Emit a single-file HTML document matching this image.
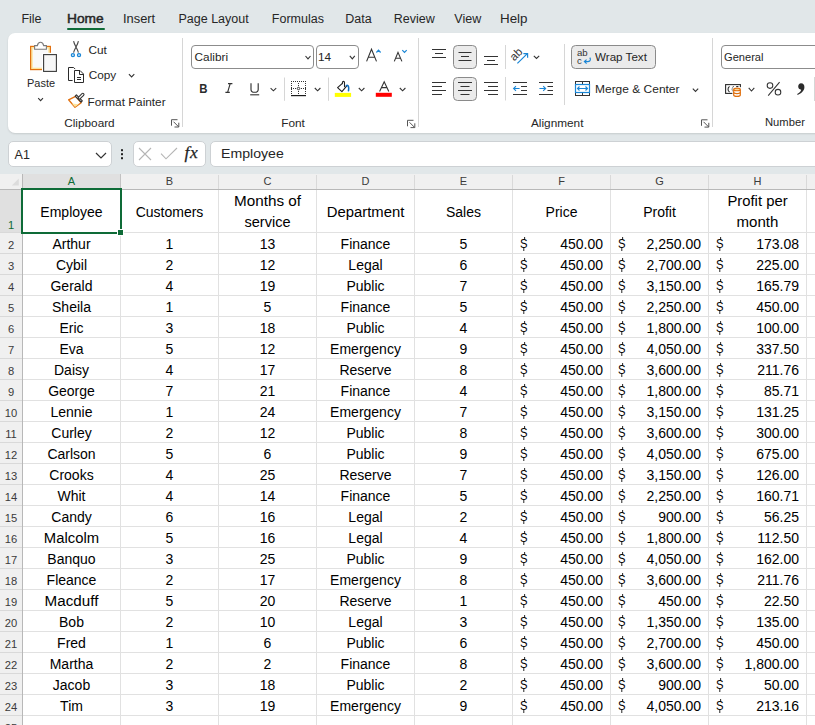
<!DOCTYPE html><html><head><meta charset="utf-8"><style>
html,body{margin:0;padding:0}
body{width:815px;height:725px;overflow:hidden;position:relative;background:#e1e7e9;font-family:'Liberation Sans', sans-serif}
.t{position:absolute;white-space:nowrap;line-height:1;z-index:2}
.a{position:absolute}
svg{position:absolute;overflow:visible;z-index:1}
.d{font-size:13.3px;color:#000;transform:scaleX(0.85);transform-origin:0 0}
.d::before,.d::after{content:'';position:absolute;width:1.1px;background:#000}
.d::before{left:4.6px;top:-0.4px;height:2.8px}
.d::after{left:3.7px;top:11.1px;height:2.4px}
</style></head><body>
<div class="t" style="left:21.40px;top:12.52px;font-size:12.5px;color:#262626;font-weight:400;">File</div>
<div class="t" style="left:67.00px;top:12.52px;font-size:12.5px;color:#262626;font-weight:400;transform:scaleX(1.1);transform-origin:0 0;-webkit-text-stroke:0.45px #262626;">Home</div>
<div class="t" style="left:122.90px;top:12.52px;font-size:12.5px;color:#262626;font-weight:400;transform:scaleX(1.03);transform-origin:0 0;">Insert</div>
<div class="t" style="left:178.50px;top:12.52px;font-size:12.5px;color:#262626;font-weight:400;">Page Layout</div>
<div class="t" style="left:271.80px;top:12.52px;font-size:12.5px;color:#262626;font-weight:400;">Formulas</div>
<div class="t" style="left:345.30px;top:12.52px;font-size:12.5px;color:#262626;font-weight:400;">Data</div>
<div class="t" style="left:393.70px;top:12.52px;font-size:12.5px;color:#262626;font-weight:400;">Review</div>
<div class="t" style="left:454.30px;top:12.52px;font-size:12.5px;color:#262626;font-weight:400;">View</div>
<div class="t" style="left:500.20px;top:12.52px;font-size:12.5px;color:#262626;font-weight:400;transform:scaleX(1.07);transform-origin:0 0;">Help</div>
<div class="a" style="left:67px;top:28px;width:38px;height:2px;background:#0e6b37;border-radius:1px"></div>
<div class="a" style="left:8px;top:33px;width:830px;height:100px;background:#fff;border-radius:7px;box-shadow:0 1px 2px rgba(0,0,0,0.12)"></div>
<div class="t" style="left:27.20px;top:78.21px;font-size:11.8px;color:#262626;font-weight:400;transform:scaleX(0.93);transform-origin:0 0;">Paste</div>
<div class="t" style="left:88.40px;top:44.61px;font-size:11.8px;color:#262626;font-weight:400;">Cut</div>
<div class="t" style="left:88.70px;top:70.41px;font-size:11.8px;color:#262626;font-weight:400;">Copy</div>
<div class="t" style="left:87.60px;top:96.61px;font-size:11.8px;color:#262626;font-weight:400;">Format Painter</div>
<div class="t" style="left:64.20px;top:118.01px;font-size:11.8px;color:#262626;font-weight:400;">Clipboard</div>
<div class="t" style="left:281.20px;top:118.41px;font-size:11.8px;color:#262626;font-weight:400;">Font</div>
<div class="t" style="left:531.00px;top:118.21px;font-size:11.8px;color:#262626;font-weight:400;">Alignment</div>
<div class="t" style="left:765.00px;top:117.41px;font-size:11.8px;color:#262626;font-weight:400;transform:scaleX(0.95);transform-origin:0 0;">Number</div>
<div class="t" style="left:595.20px;top:52.01px;font-size:11.8px;color:#262626;font-weight:400;transform:scaleX(0.985);transform-origin:0 0;">Wrap Text</div>
<div class="t" style="left:595.20px;top:84.01px;font-size:11.8px;color:#262626;font-weight:400;transform:scaleX(1.015);transform-origin:0 0;">Merge &amp; Center</div>
<div class="a" style="left:182px;top:38px;width:1px;height:89px;background:#d6d6d6"></div>
<div class="a" style="left:418px;top:38px;width:1px;height:89px;background:#d6d6d6"></div>
<div class="a" style="left:712px;top:38px;width:1px;height:89px;background:#d6d6d6"></div>
<div class="a" style="left:191px;top:45px;width:121px;height:22px;border:1px solid #8c8c8c;border-radius:4px;background:#fff"></div>
<div class="a" style="left:316px;top:45px;width:41px;height:22px;border:1px solid #8c8c8c;border-radius:4px;background:#fff"></div>
<div class="t" style="left:194.60px;top:51.81px;font-size:11.8px;color:#262626;font-weight:400;">Calibri</div>
<div class="t" style="left:317.90px;top:52.01px;font-size:11.8px;color:#262626;font-weight:400;">14</div>
<div class="a" style="left:721px;top:45px;width:120px;height:22px;border:1px solid #8c8c8c;border-radius:4px;background:#fff"></div>
<div class="t" style="left:724.20px;top:51.81px;font-size:11.8px;color:#262626;font-weight:400;transform:scaleX(0.94);transform-origin:0 0;">General</div>
<div class="a" style="left:8px;top:141px;width:102px;height:24px;border:1px solid #cdd1d4;border-radius:5px;background:#fff"></div>
<div class="t" style="left:14.60px;top:149.02px;font-size:12.5px;color:#262626;font-weight:400;">A1</div>
<div class="a" style="left:133px;top:141px;width:71px;height:24px;border:1px solid #cdd1d4;border-radius:5px;background:#fff"></div>
<div class="a" style="left:210px;top:141px;width:640px;height:24px;border:1px solid #cdd1d4;border-radius:5px;background:#fff"></div>
<div class="t" style="left:221.20px;top:147.37px;font-size:13.5px;color:#262626;font-weight:400;transform:scaleX(1.045);transform-origin:0 0;">Employee</div>
<div class="a" style="left:0;top:174px;width:815px;height:551px;background:#fff"></div>
<div class="a" style="left:0;top:174px;width:815px;height:15px;background:#f0f0f0"></div>
<div class="a" style="left:23px;top:174px;width:97px;height:15px;background:#e0e0e0"></div>
<div class="a" style="left:0;top:190px;width:22px;height:535px;background:#f0f0f0"></div>
<div class="a" style="left:0;top:190px;width:22px;height:42px;background:#e0e0e0"></div>
<div class="a" style="left:0;top:189px;width:815px;height:1px;background:#b8b8b8"></div>
<div class="a" style="left:22px;top:174px;width:1px;height:551px;background:#b8b8b8"></div>
<div class="a" style="left:23px;top:232px;width:792px;height:1px;background:#e1e1e1"></div>
<div class="a" style="left:0;top:232px;width:22px;height:1px;background:#d9d9d9"></div>
<div class="a" style="left:23px;top:253px;width:792px;height:1px;background:#e1e1e1"></div>
<div class="a" style="left:0;top:253px;width:22px;height:1px;background:#d9d9d9"></div>
<div class="a" style="left:23px;top:274px;width:792px;height:1px;background:#e1e1e1"></div>
<div class="a" style="left:0;top:274px;width:22px;height:1px;background:#d9d9d9"></div>
<div class="a" style="left:23px;top:295px;width:792px;height:1px;background:#e1e1e1"></div>
<div class="a" style="left:0;top:295px;width:22px;height:1px;background:#d9d9d9"></div>
<div class="a" style="left:23px;top:316px;width:792px;height:1px;background:#e1e1e1"></div>
<div class="a" style="left:0;top:316px;width:22px;height:1px;background:#d9d9d9"></div>
<div class="a" style="left:23px;top:337px;width:792px;height:1px;background:#e1e1e1"></div>
<div class="a" style="left:0;top:337px;width:22px;height:1px;background:#d9d9d9"></div>
<div class="a" style="left:23px;top:358px;width:792px;height:1px;background:#e1e1e1"></div>
<div class="a" style="left:0;top:358px;width:22px;height:1px;background:#d9d9d9"></div>
<div class="a" style="left:23px;top:379px;width:792px;height:1px;background:#e1e1e1"></div>
<div class="a" style="left:0;top:379px;width:22px;height:1px;background:#d9d9d9"></div>
<div class="a" style="left:23px;top:400px;width:792px;height:1px;background:#e1e1e1"></div>
<div class="a" style="left:0;top:400px;width:22px;height:1px;background:#d9d9d9"></div>
<div class="a" style="left:23px;top:421px;width:792px;height:1px;background:#e1e1e1"></div>
<div class="a" style="left:0;top:421px;width:22px;height:1px;background:#d9d9d9"></div>
<div class="a" style="left:23px;top:442px;width:792px;height:1px;background:#e1e1e1"></div>
<div class="a" style="left:0;top:442px;width:22px;height:1px;background:#d9d9d9"></div>
<div class="a" style="left:23px;top:463px;width:792px;height:1px;background:#e1e1e1"></div>
<div class="a" style="left:0;top:463px;width:22px;height:1px;background:#d9d9d9"></div>
<div class="a" style="left:23px;top:484px;width:792px;height:1px;background:#e1e1e1"></div>
<div class="a" style="left:0;top:484px;width:22px;height:1px;background:#d9d9d9"></div>
<div class="a" style="left:23px;top:505px;width:792px;height:1px;background:#e1e1e1"></div>
<div class="a" style="left:0;top:505px;width:22px;height:1px;background:#d9d9d9"></div>
<div class="a" style="left:23px;top:526px;width:792px;height:1px;background:#e1e1e1"></div>
<div class="a" style="left:0;top:526px;width:22px;height:1px;background:#d9d9d9"></div>
<div class="a" style="left:23px;top:547px;width:792px;height:1px;background:#e1e1e1"></div>
<div class="a" style="left:0;top:547px;width:22px;height:1px;background:#d9d9d9"></div>
<div class="a" style="left:23px;top:568px;width:792px;height:1px;background:#e1e1e1"></div>
<div class="a" style="left:0;top:568px;width:22px;height:1px;background:#d9d9d9"></div>
<div class="a" style="left:23px;top:589px;width:792px;height:1px;background:#e1e1e1"></div>
<div class="a" style="left:0;top:589px;width:22px;height:1px;background:#d9d9d9"></div>
<div class="a" style="left:23px;top:610px;width:792px;height:1px;background:#e1e1e1"></div>
<div class="a" style="left:0;top:610px;width:22px;height:1px;background:#d9d9d9"></div>
<div class="a" style="left:23px;top:631px;width:792px;height:1px;background:#e1e1e1"></div>
<div class="a" style="left:0;top:631px;width:22px;height:1px;background:#d9d9d9"></div>
<div class="a" style="left:23px;top:652px;width:792px;height:1px;background:#e1e1e1"></div>
<div class="a" style="left:0;top:652px;width:22px;height:1px;background:#d9d9d9"></div>
<div class="a" style="left:23px;top:673px;width:792px;height:1px;background:#e1e1e1"></div>
<div class="a" style="left:0;top:673px;width:22px;height:1px;background:#d9d9d9"></div>
<div class="a" style="left:23px;top:694px;width:792px;height:1px;background:#e1e1e1"></div>
<div class="a" style="left:0;top:694px;width:22px;height:1px;background:#d9d9d9"></div>
<div class="a" style="left:23px;top:715px;width:792px;height:1px;background:#e1e1e1"></div>
<div class="a" style="left:0;top:715px;width:22px;height:1px;background:#d9d9d9"></div>
<div class="a" style="left:23px;top:736px;width:792px;height:1px;background:#e1e1e1"></div>
<div class="a" style="left:0;top:736px;width:22px;height:1px;background:#d9d9d9"></div>
<div class="a" style="left:23px;top:757px;width:792px;height:1px;background:#e1e1e1"></div>
<div class="a" style="left:0;top:757px;width:22px;height:1px;background:#d9d9d9"></div>
<div class="a" style="left:120px;top:190px;width:1px;height:535px;background:#e1e1e1"></div>
<div class="a" style="left:120px;top:174px;width:1px;height:15px;background:#c2c2c2"></div>
<div class="a" style="left:218px;top:190px;width:1px;height:535px;background:#e1e1e1"></div>
<div class="a" style="left:218px;top:175px;width:1px;height:14px;background:#d9d9d9"></div>
<div class="a" style="left:316px;top:190px;width:1px;height:535px;background:#e1e1e1"></div>
<div class="a" style="left:316px;top:175px;width:1px;height:14px;background:#d9d9d9"></div>
<div class="a" style="left:414px;top:190px;width:1px;height:535px;background:#e1e1e1"></div>
<div class="a" style="left:414px;top:175px;width:1px;height:14px;background:#d9d9d9"></div>
<div class="a" style="left:512px;top:190px;width:1px;height:535px;background:#e1e1e1"></div>
<div class="a" style="left:512px;top:175px;width:1px;height:14px;background:#d9d9d9"></div>
<div class="a" style="left:610px;top:190px;width:1px;height:535px;background:#e1e1e1"></div>
<div class="a" style="left:610px;top:175px;width:1px;height:14px;background:#d9d9d9"></div>
<div class="a" style="left:708px;top:190px;width:1px;height:535px;background:#e1e1e1"></div>
<div class="a" style="left:708px;top:175px;width:1px;height:14px;background:#d9d9d9"></div>
<div class="a" style="left:806px;top:190px;width:1px;height:535px;background:#e1e1e1"></div>
<div class="a" style="left:806px;top:175px;width:1px;height:14px;background:#d9d9d9"></div>
<div class="t" style="left:23px;top:175px;width:97px;text-align:center;font-size:11px;line-height:12px;color:#0e6b35">A</div>
<div class="t" style="left:121px;top:175px;width:97px;text-align:center;font-size:11px;line-height:12px;color:#3b3b3b">B</div>
<div class="t" style="left:219px;top:175px;width:97px;text-align:center;font-size:11px;line-height:12px;color:#3b3b3b">C</div>
<div class="t" style="left:317px;top:175px;width:97px;text-align:center;font-size:11px;line-height:12px;color:#3b3b3b">D</div>
<div class="t" style="left:415px;top:175px;width:97px;text-align:center;font-size:11px;line-height:12px;color:#3b3b3b">E</div>
<div class="t" style="left:513px;top:175px;width:97px;text-align:center;font-size:11px;line-height:12px;color:#3b3b3b">F</div>
<div class="t" style="left:611px;top:175px;width:97px;text-align:center;font-size:11px;line-height:12px;color:#3b3b3b">G</div>
<div class="t" style="left:709px;top:175px;width:97px;text-align:center;font-size:11px;line-height:12px;color:#3b3b3b">H</div>
<div class="t" style="left:807px;top:175px;width:97px;text-align:center;font-size:11px;line-height:12px;color:#3b3b3b">I</div>
<div class="t" style="left:0;top:219.92px;width:22px;text-align:center;font-size:11.2px;color:#0e6b35">1</div>
<div class="t" style="left:0;top:240.32px;width:22px;text-align:center;font-size:11.2px;color:#3b3b3b">2</div>
<div class="t" style="left:0;top:261.32px;width:22px;text-align:center;font-size:11.2px;color:#3b3b3b">3</div>
<div class="t" style="left:0;top:282.32px;width:22px;text-align:center;font-size:11.2px;color:#3b3b3b">4</div>
<div class="t" style="left:0;top:303.32px;width:22px;text-align:center;font-size:11.2px;color:#3b3b3b">5</div>
<div class="t" style="left:0;top:324.32px;width:22px;text-align:center;font-size:11.2px;color:#3b3b3b">6</div>
<div class="t" style="left:0;top:345.32px;width:22px;text-align:center;font-size:11.2px;color:#3b3b3b">7</div>
<div class="t" style="left:0;top:366.32px;width:22px;text-align:center;font-size:11.2px;color:#3b3b3b">8</div>
<div class="t" style="left:0;top:387.32px;width:22px;text-align:center;font-size:11.2px;color:#3b3b3b">9</div>
<div class="t" style="left:0;top:408.32px;width:22px;text-align:center;font-size:11.2px;color:#3b3b3b">10</div>
<div class="t" style="left:0;top:429.32px;width:22px;text-align:center;font-size:11.2px;color:#3b3b3b">11</div>
<div class="t" style="left:0;top:450.32px;width:22px;text-align:center;font-size:11.2px;color:#3b3b3b">12</div>
<div class="t" style="left:0;top:471.32px;width:22px;text-align:center;font-size:11.2px;color:#3b3b3b">13</div>
<div class="t" style="left:0;top:492.32px;width:22px;text-align:center;font-size:11.2px;color:#3b3b3b">14</div>
<div class="t" style="left:0;top:513.32px;width:22px;text-align:center;font-size:11.2px;color:#3b3b3b">15</div>
<div class="t" style="left:0;top:534.32px;width:22px;text-align:center;font-size:11.2px;color:#3b3b3b">16</div>
<div class="t" style="left:0;top:555.32px;width:22px;text-align:center;font-size:11.2px;color:#3b3b3b">17</div>
<div class="t" style="left:0;top:576.32px;width:22px;text-align:center;font-size:11.2px;color:#3b3b3b">18</div>
<div class="t" style="left:0;top:597.32px;width:22px;text-align:center;font-size:11.2px;color:#3b3b3b">19</div>
<div class="t" style="left:0;top:618.32px;width:22px;text-align:center;font-size:11.2px;color:#3b3b3b">20</div>
<div class="t" style="left:0;top:639.32px;width:22px;text-align:center;font-size:11.2px;color:#3b3b3b">21</div>
<div class="t" style="left:0;top:660.32px;width:22px;text-align:center;font-size:11.2px;color:#3b3b3b">22</div>
<div class="t" style="left:0;top:681.32px;width:22px;text-align:center;font-size:11.2px;color:#3b3b3b">23</div>
<div class="t" style="left:0;top:702.32px;width:22px;text-align:center;font-size:11.2px;color:#3b3b3b">24</div>
<div class="t" style="left:0;top:723.32px;width:22px;text-align:center;font-size:11.2px;color:#3b3b3b">25</div>
<div class="t" style="left:0;top:744.32px;width:22px;text-align:center;font-size:11.2px;color:#3b3b3b">26</div>
<div class="t" style="left:23px;top:205.15px;width:97px;text-align:center;font-size:14px;color:#000;">Employee</div>
<div class="t" style="left:121px;top:205.15px;width:97px;text-align:center;font-size:14px;color:#000;">Customers</div>
<div class="t" style="left:317px;top:205.15px;width:97px;text-align:center;font-size:14px;color:#000;transform:scaleX(1.06);transform-origin:50% 0;">Department</div>
<div class="t" style="left:415px;top:205.15px;width:97px;text-align:center;font-size:14px;color:#000;">Sales</div>
<div class="t" style="left:513px;top:205.15px;width:97px;text-align:center;font-size:14px;color:#000;">Price</div>
<div class="t" style="left:611px;top:205.15px;width:97px;text-align:center;font-size:14px;color:#000;">Profit</div>
<div class="t" style="left:219px;top:194.15px;width:97px;text-align:center;font-size:14px;color:#000;transform:scaleX(1.09);transform-origin:50% 0;">Months of</div>
<div class="t" style="left:219px;top:215.15px;width:97px;text-align:center;font-size:14px;color:#000;transform:scaleX(1.04);transform-origin:50% 0;">service</div>
<div class="t" style="left:709px;top:194.15px;width:97px;text-align:center;font-size:14px;color:#000;transform:scaleX(1.06);transform-origin:50% 0;">Profit per</div>
<div class="t" style="left:709px;top:215.15px;width:97px;text-align:center;font-size:14px;color:#000;transform:scaleX(1.075);transform-origin:50% 0;">month</div>
<div class="t" style="left:23px;top:237.15px;width:97px;text-align:center;font-size:14px;color:#000;">Arthur</div>
<div class="t" style="left:121px;top:237.15px;width:97px;text-align:center;font-size:14px;color:#000;">1</div>
<div class="t" style="left:219px;top:237.15px;width:97px;text-align:center;font-size:14px;color:#000;">13</div>
<div class="t" style="left:317px;top:237.15px;width:97px;text-align:center;font-size:14px;color:#000;">Finance</div>
<div class="t" style="left:415px;top:237.15px;width:97px;text-align:center;font-size:14px;color:#000;">5</div>
<div class="t d" style="left:520.2px;top:237.14px">S</div>
<div class="t" style="left:513px;top:237.15px;width:90px;text-align:right;font-size:14px;color:#000">450.00</div>
<div class="t d" style="left:618.2px;top:237.14px">S</div>
<div class="t" style="left:611px;top:237.15px;width:90px;text-align:right;font-size:14px;color:#000">2,250.00</div>
<div class="t d" style="left:716.2px;top:237.14px">S</div>
<div class="t" style="left:709px;top:237.15px;width:90px;text-align:right;font-size:14px;color:#000">173.08</div>
<div class="t" style="left:23px;top:258.15px;width:97px;text-align:center;font-size:14px;color:#000;">Cybil</div>
<div class="t" style="left:121px;top:258.15px;width:97px;text-align:center;font-size:14px;color:#000;">2</div>
<div class="t" style="left:219px;top:258.15px;width:97px;text-align:center;font-size:14px;color:#000;">12</div>
<div class="t" style="left:317px;top:258.15px;width:97px;text-align:center;font-size:14px;color:#000;">Legal</div>
<div class="t" style="left:415px;top:258.15px;width:97px;text-align:center;font-size:14px;color:#000;">6</div>
<div class="t d" style="left:520.2px;top:258.14px">S</div>
<div class="t" style="left:513px;top:258.15px;width:90px;text-align:right;font-size:14px;color:#000">450.00</div>
<div class="t d" style="left:618.2px;top:258.14px">S</div>
<div class="t" style="left:611px;top:258.15px;width:90px;text-align:right;font-size:14px;color:#000">2,700.00</div>
<div class="t d" style="left:716.2px;top:258.14px">S</div>
<div class="t" style="left:709px;top:258.15px;width:90px;text-align:right;font-size:14px;color:#000">225.00</div>
<div class="t" style="left:23px;top:279.15px;width:97px;text-align:center;font-size:14px;color:#000;">Gerald</div>
<div class="t" style="left:121px;top:279.15px;width:97px;text-align:center;font-size:14px;color:#000;">4</div>
<div class="t" style="left:219px;top:279.15px;width:97px;text-align:center;font-size:14px;color:#000;">19</div>
<div class="t" style="left:317px;top:279.15px;width:97px;text-align:center;font-size:14px;color:#000;">Public</div>
<div class="t" style="left:415px;top:279.15px;width:97px;text-align:center;font-size:14px;color:#000;">7</div>
<div class="t d" style="left:520.2px;top:279.14px">S</div>
<div class="t" style="left:513px;top:279.15px;width:90px;text-align:right;font-size:14px;color:#000">450.00</div>
<div class="t d" style="left:618.2px;top:279.14px">S</div>
<div class="t" style="left:611px;top:279.15px;width:90px;text-align:right;font-size:14px;color:#000">3,150.00</div>
<div class="t d" style="left:716.2px;top:279.14px">S</div>
<div class="t" style="left:709px;top:279.15px;width:90px;text-align:right;font-size:14px;color:#000">165.79</div>
<div class="t" style="left:23px;top:300.15px;width:97px;text-align:center;font-size:14px;color:#000;">Sheila</div>
<div class="t" style="left:121px;top:300.15px;width:97px;text-align:center;font-size:14px;color:#000;">1</div>
<div class="t" style="left:219px;top:300.15px;width:97px;text-align:center;font-size:14px;color:#000;">5</div>
<div class="t" style="left:317px;top:300.15px;width:97px;text-align:center;font-size:14px;color:#000;">Finance</div>
<div class="t" style="left:415px;top:300.15px;width:97px;text-align:center;font-size:14px;color:#000;">5</div>
<div class="t d" style="left:520.2px;top:300.14px">S</div>
<div class="t" style="left:513px;top:300.15px;width:90px;text-align:right;font-size:14px;color:#000">450.00</div>
<div class="t d" style="left:618.2px;top:300.14px">S</div>
<div class="t" style="left:611px;top:300.15px;width:90px;text-align:right;font-size:14px;color:#000">2,250.00</div>
<div class="t d" style="left:716.2px;top:300.14px">S</div>
<div class="t" style="left:709px;top:300.15px;width:90px;text-align:right;font-size:14px;color:#000">450.00</div>
<div class="t" style="left:23px;top:321.15px;width:97px;text-align:center;font-size:14px;color:#000;">Eric</div>
<div class="t" style="left:121px;top:321.15px;width:97px;text-align:center;font-size:14px;color:#000;">3</div>
<div class="t" style="left:219px;top:321.15px;width:97px;text-align:center;font-size:14px;color:#000;">18</div>
<div class="t" style="left:317px;top:321.15px;width:97px;text-align:center;font-size:14px;color:#000;">Public</div>
<div class="t" style="left:415px;top:321.15px;width:97px;text-align:center;font-size:14px;color:#000;">4</div>
<div class="t d" style="left:520.2px;top:321.14px">S</div>
<div class="t" style="left:513px;top:321.15px;width:90px;text-align:right;font-size:14px;color:#000">450.00</div>
<div class="t d" style="left:618.2px;top:321.14px">S</div>
<div class="t" style="left:611px;top:321.15px;width:90px;text-align:right;font-size:14px;color:#000">1,800.00</div>
<div class="t d" style="left:716.2px;top:321.14px">S</div>
<div class="t" style="left:709px;top:321.15px;width:90px;text-align:right;font-size:14px;color:#000">100.00</div>
<div class="t" style="left:23px;top:342.15px;width:97px;text-align:center;font-size:14px;color:#000;">Eva</div>
<div class="t" style="left:121px;top:342.15px;width:97px;text-align:center;font-size:14px;color:#000;">5</div>
<div class="t" style="left:219px;top:342.15px;width:97px;text-align:center;font-size:14px;color:#000;">12</div>
<div class="t" style="left:317px;top:342.15px;width:97px;text-align:center;font-size:14px;color:#000;">Emergency</div>
<div class="t" style="left:415px;top:342.15px;width:97px;text-align:center;font-size:14px;color:#000;">9</div>
<div class="t d" style="left:520.2px;top:342.14px">S</div>
<div class="t" style="left:513px;top:342.15px;width:90px;text-align:right;font-size:14px;color:#000">450.00</div>
<div class="t d" style="left:618.2px;top:342.14px">S</div>
<div class="t" style="left:611px;top:342.15px;width:90px;text-align:right;font-size:14px;color:#000">4,050.00</div>
<div class="t d" style="left:716.2px;top:342.14px">S</div>
<div class="t" style="left:709px;top:342.15px;width:90px;text-align:right;font-size:14px;color:#000">337.50</div>
<div class="t" style="left:23px;top:363.15px;width:97px;text-align:center;font-size:14px;color:#000;">Daisy</div>
<div class="t" style="left:121px;top:363.15px;width:97px;text-align:center;font-size:14px;color:#000;">4</div>
<div class="t" style="left:219px;top:363.15px;width:97px;text-align:center;font-size:14px;color:#000;">17</div>
<div class="t" style="left:317px;top:363.15px;width:97px;text-align:center;font-size:14px;color:#000;">Reserve</div>
<div class="t" style="left:415px;top:363.15px;width:97px;text-align:center;font-size:14px;color:#000;">8</div>
<div class="t d" style="left:520.2px;top:363.14px">S</div>
<div class="t" style="left:513px;top:363.15px;width:90px;text-align:right;font-size:14px;color:#000">450.00</div>
<div class="t d" style="left:618.2px;top:363.14px">S</div>
<div class="t" style="left:611px;top:363.15px;width:90px;text-align:right;font-size:14px;color:#000">3,600.00</div>
<div class="t d" style="left:716.2px;top:363.14px">S</div>
<div class="t" style="left:709px;top:363.15px;width:90px;text-align:right;font-size:14px;color:#000">211.76</div>
<div class="t" style="left:23px;top:384.15px;width:97px;text-align:center;font-size:14px;color:#000;">George</div>
<div class="t" style="left:121px;top:384.15px;width:97px;text-align:center;font-size:14px;color:#000;">7</div>
<div class="t" style="left:219px;top:384.15px;width:97px;text-align:center;font-size:14px;color:#000;">21</div>
<div class="t" style="left:317px;top:384.15px;width:97px;text-align:center;font-size:14px;color:#000;">Finance</div>
<div class="t" style="left:415px;top:384.15px;width:97px;text-align:center;font-size:14px;color:#000;">4</div>
<div class="t d" style="left:520.2px;top:384.14px">S</div>
<div class="t" style="left:513px;top:384.15px;width:90px;text-align:right;font-size:14px;color:#000">450.00</div>
<div class="t d" style="left:618.2px;top:384.14px">S</div>
<div class="t" style="left:611px;top:384.15px;width:90px;text-align:right;font-size:14px;color:#000">1,800.00</div>
<div class="t d" style="left:716.2px;top:384.14px">S</div>
<div class="t" style="left:709px;top:384.15px;width:90px;text-align:right;font-size:14px;color:#000">85.71</div>
<div class="t" style="left:23px;top:405.15px;width:97px;text-align:center;font-size:14px;color:#000;">Lennie</div>
<div class="t" style="left:121px;top:405.15px;width:97px;text-align:center;font-size:14px;color:#000;">1</div>
<div class="t" style="left:219px;top:405.15px;width:97px;text-align:center;font-size:14px;color:#000;">24</div>
<div class="t" style="left:317px;top:405.15px;width:97px;text-align:center;font-size:14px;color:#000;">Emergency</div>
<div class="t" style="left:415px;top:405.15px;width:97px;text-align:center;font-size:14px;color:#000;">7</div>
<div class="t d" style="left:520.2px;top:405.14px">S</div>
<div class="t" style="left:513px;top:405.15px;width:90px;text-align:right;font-size:14px;color:#000">450.00</div>
<div class="t d" style="left:618.2px;top:405.14px">S</div>
<div class="t" style="left:611px;top:405.15px;width:90px;text-align:right;font-size:14px;color:#000">3,150.00</div>
<div class="t d" style="left:716.2px;top:405.14px">S</div>
<div class="t" style="left:709px;top:405.15px;width:90px;text-align:right;font-size:14px;color:#000">131.25</div>
<div class="t" style="left:23px;top:426.15px;width:97px;text-align:center;font-size:14px;color:#000;">Curley</div>
<div class="t" style="left:121px;top:426.15px;width:97px;text-align:center;font-size:14px;color:#000;">2</div>
<div class="t" style="left:219px;top:426.15px;width:97px;text-align:center;font-size:14px;color:#000;">12</div>
<div class="t" style="left:317px;top:426.15px;width:97px;text-align:center;font-size:14px;color:#000;">Public</div>
<div class="t" style="left:415px;top:426.15px;width:97px;text-align:center;font-size:14px;color:#000;">8</div>
<div class="t d" style="left:520.2px;top:426.14px">S</div>
<div class="t" style="left:513px;top:426.15px;width:90px;text-align:right;font-size:14px;color:#000">450.00</div>
<div class="t d" style="left:618.2px;top:426.14px">S</div>
<div class="t" style="left:611px;top:426.15px;width:90px;text-align:right;font-size:14px;color:#000">3,600.00</div>
<div class="t d" style="left:716.2px;top:426.14px">S</div>
<div class="t" style="left:709px;top:426.15px;width:90px;text-align:right;font-size:14px;color:#000">300.00</div>
<div class="t" style="left:23px;top:447.15px;width:97px;text-align:center;font-size:14px;color:#000;">Carlson</div>
<div class="t" style="left:121px;top:447.15px;width:97px;text-align:center;font-size:14px;color:#000;">5</div>
<div class="t" style="left:219px;top:447.15px;width:97px;text-align:center;font-size:14px;color:#000;">6</div>
<div class="t" style="left:317px;top:447.15px;width:97px;text-align:center;font-size:14px;color:#000;">Public</div>
<div class="t" style="left:415px;top:447.15px;width:97px;text-align:center;font-size:14px;color:#000;">9</div>
<div class="t d" style="left:520.2px;top:447.14px">S</div>
<div class="t" style="left:513px;top:447.15px;width:90px;text-align:right;font-size:14px;color:#000">450.00</div>
<div class="t d" style="left:618.2px;top:447.14px">S</div>
<div class="t" style="left:611px;top:447.15px;width:90px;text-align:right;font-size:14px;color:#000">4,050.00</div>
<div class="t d" style="left:716.2px;top:447.14px">S</div>
<div class="t" style="left:709px;top:447.15px;width:90px;text-align:right;font-size:14px;color:#000">675.00</div>
<div class="t" style="left:23px;top:468.15px;width:97px;text-align:center;font-size:14px;color:#000;">Crooks</div>
<div class="t" style="left:121px;top:468.15px;width:97px;text-align:center;font-size:14px;color:#000;">4</div>
<div class="t" style="left:219px;top:468.15px;width:97px;text-align:center;font-size:14px;color:#000;">25</div>
<div class="t" style="left:317px;top:468.15px;width:97px;text-align:center;font-size:14px;color:#000;">Reserve</div>
<div class="t" style="left:415px;top:468.15px;width:97px;text-align:center;font-size:14px;color:#000;">7</div>
<div class="t d" style="left:520.2px;top:468.14px">S</div>
<div class="t" style="left:513px;top:468.15px;width:90px;text-align:right;font-size:14px;color:#000">450.00</div>
<div class="t d" style="left:618.2px;top:468.14px">S</div>
<div class="t" style="left:611px;top:468.15px;width:90px;text-align:right;font-size:14px;color:#000">3,150.00</div>
<div class="t d" style="left:716.2px;top:468.14px">S</div>
<div class="t" style="left:709px;top:468.15px;width:90px;text-align:right;font-size:14px;color:#000">126.00</div>
<div class="t" style="left:23px;top:489.15px;width:97px;text-align:center;font-size:14px;color:#000;">Whit</div>
<div class="t" style="left:121px;top:489.15px;width:97px;text-align:center;font-size:14px;color:#000;">4</div>
<div class="t" style="left:219px;top:489.15px;width:97px;text-align:center;font-size:14px;color:#000;">14</div>
<div class="t" style="left:317px;top:489.15px;width:97px;text-align:center;font-size:14px;color:#000;">Finance</div>
<div class="t" style="left:415px;top:489.15px;width:97px;text-align:center;font-size:14px;color:#000;">5</div>
<div class="t d" style="left:520.2px;top:489.14px">S</div>
<div class="t" style="left:513px;top:489.15px;width:90px;text-align:right;font-size:14px;color:#000">450.00</div>
<div class="t d" style="left:618.2px;top:489.14px">S</div>
<div class="t" style="left:611px;top:489.15px;width:90px;text-align:right;font-size:14px;color:#000">2,250.00</div>
<div class="t d" style="left:716.2px;top:489.14px">S</div>
<div class="t" style="left:709px;top:489.15px;width:90px;text-align:right;font-size:14px;color:#000">160.71</div>
<div class="t" style="left:23px;top:510.15px;width:97px;text-align:center;font-size:14px;color:#000;">Candy</div>
<div class="t" style="left:121px;top:510.15px;width:97px;text-align:center;font-size:14px;color:#000;">6</div>
<div class="t" style="left:219px;top:510.15px;width:97px;text-align:center;font-size:14px;color:#000;">16</div>
<div class="t" style="left:317px;top:510.15px;width:97px;text-align:center;font-size:14px;color:#000;">Legal</div>
<div class="t" style="left:415px;top:510.15px;width:97px;text-align:center;font-size:14px;color:#000;">2</div>
<div class="t d" style="left:520.2px;top:510.14px">S</div>
<div class="t" style="left:513px;top:510.15px;width:90px;text-align:right;font-size:14px;color:#000">450.00</div>
<div class="t d" style="left:618.2px;top:510.14px">S</div>
<div class="t" style="left:611px;top:510.15px;width:90px;text-align:right;font-size:14px;color:#000">900.00</div>
<div class="t d" style="left:716.2px;top:510.14px">S</div>
<div class="t" style="left:709px;top:510.15px;width:90px;text-align:right;font-size:14px;color:#000">56.25</div>
<div class="t" style="left:23px;top:531.15px;width:97px;text-align:center;font-size:14px;color:#000;transform:scaleX(1.06);transform-origin:50% 0;">Malcolm</div>
<div class="t" style="left:121px;top:531.15px;width:97px;text-align:center;font-size:14px;color:#000;">5</div>
<div class="t" style="left:219px;top:531.15px;width:97px;text-align:center;font-size:14px;color:#000;">16</div>
<div class="t" style="left:317px;top:531.15px;width:97px;text-align:center;font-size:14px;color:#000;">Legal</div>
<div class="t" style="left:415px;top:531.15px;width:97px;text-align:center;font-size:14px;color:#000;">4</div>
<div class="t d" style="left:520.2px;top:531.14px">S</div>
<div class="t" style="left:513px;top:531.15px;width:90px;text-align:right;font-size:14px;color:#000">450.00</div>
<div class="t d" style="left:618.2px;top:531.14px">S</div>
<div class="t" style="left:611px;top:531.15px;width:90px;text-align:right;font-size:14px;color:#000">1,800.00</div>
<div class="t d" style="left:716.2px;top:531.14px">S</div>
<div class="t" style="left:709px;top:531.15px;width:90px;text-align:right;font-size:14px;color:#000">112.50</div>
<div class="t" style="left:23px;top:552.15px;width:97px;text-align:center;font-size:14px;color:#000;">Banquo</div>
<div class="t" style="left:121px;top:552.15px;width:97px;text-align:center;font-size:14px;color:#000;">3</div>
<div class="t" style="left:219px;top:552.15px;width:97px;text-align:center;font-size:14px;color:#000;">25</div>
<div class="t" style="left:317px;top:552.15px;width:97px;text-align:center;font-size:14px;color:#000;">Public</div>
<div class="t" style="left:415px;top:552.15px;width:97px;text-align:center;font-size:14px;color:#000;">9</div>
<div class="t d" style="left:520.2px;top:552.14px">S</div>
<div class="t" style="left:513px;top:552.15px;width:90px;text-align:right;font-size:14px;color:#000">450.00</div>
<div class="t d" style="left:618.2px;top:552.14px">S</div>
<div class="t" style="left:611px;top:552.15px;width:90px;text-align:right;font-size:14px;color:#000">4,050.00</div>
<div class="t d" style="left:716.2px;top:552.14px">S</div>
<div class="t" style="left:709px;top:552.15px;width:90px;text-align:right;font-size:14px;color:#000">162.00</div>
<div class="t" style="left:23px;top:573.15px;width:97px;text-align:center;font-size:14px;color:#000;">Fleance</div>
<div class="t" style="left:121px;top:573.15px;width:97px;text-align:center;font-size:14px;color:#000;">2</div>
<div class="t" style="left:219px;top:573.15px;width:97px;text-align:center;font-size:14px;color:#000;">17</div>
<div class="t" style="left:317px;top:573.15px;width:97px;text-align:center;font-size:14px;color:#000;">Emergency</div>
<div class="t" style="left:415px;top:573.15px;width:97px;text-align:center;font-size:14px;color:#000;">8</div>
<div class="t d" style="left:520.2px;top:573.14px">S</div>
<div class="t" style="left:513px;top:573.15px;width:90px;text-align:right;font-size:14px;color:#000">450.00</div>
<div class="t d" style="left:618.2px;top:573.14px">S</div>
<div class="t" style="left:611px;top:573.15px;width:90px;text-align:right;font-size:14px;color:#000">3,600.00</div>
<div class="t d" style="left:716.2px;top:573.14px">S</div>
<div class="t" style="left:709px;top:573.15px;width:90px;text-align:right;font-size:14px;color:#000">211.76</div>
<div class="t" style="left:23px;top:594.15px;width:97px;text-align:center;font-size:14px;color:#000;transform:scaleX(1.085);transform-origin:50% 0;">Macduff</div>
<div class="t" style="left:121px;top:594.15px;width:97px;text-align:center;font-size:14px;color:#000;">5</div>
<div class="t" style="left:219px;top:594.15px;width:97px;text-align:center;font-size:14px;color:#000;">20</div>
<div class="t" style="left:317px;top:594.15px;width:97px;text-align:center;font-size:14px;color:#000;">Reserve</div>
<div class="t" style="left:415px;top:594.15px;width:97px;text-align:center;font-size:14px;color:#000;">1</div>
<div class="t d" style="left:520.2px;top:594.14px">S</div>
<div class="t" style="left:513px;top:594.15px;width:90px;text-align:right;font-size:14px;color:#000">450.00</div>
<div class="t d" style="left:618.2px;top:594.14px">S</div>
<div class="t" style="left:611px;top:594.15px;width:90px;text-align:right;font-size:14px;color:#000">450.00</div>
<div class="t d" style="left:716.2px;top:594.14px">S</div>
<div class="t" style="left:709px;top:594.15px;width:90px;text-align:right;font-size:14px;color:#000">22.50</div>
<div class="t" style="left:23px;top:615.15px;width:97px;text-align:center;font-size:14px;color:#000;">Bob</div>
<div class="t" style="left:121px;top:615.15px;width:97px;text-align:center;font-size:14px;color:#000;">2</div>
<div class="t" style="left:219px;top:615.15px;width:97px;text-align:center;font-size:14px;color:#000;">10</div>
<div class="t" style="left:317px;top:615.15px;width:97px;text-align:center;font-size:14px;color:#000;">Legal</div>
<div class="t" style="left:415px;top:615.15px;width:97px;text-align:center;font-size:14px;color:#000;">3</div>
<div class="t d" style="left:520.2px;top:615.14px">S</div>
<div class="t" style="left:513px;top:615.15px;width:90px;text-align:right;font-size:14px;color:#000">450.00</div>
<div class="t d" style="left:618.2px;top:615.14px">S</div>
<div class="t" style="left:611px;top:615.15px;width:90px;text-align:right;font-size:14px;color:#000">1,350.00</div>
<div class="t d" style="left:716.2px;top:615.14px">S</div>
<div class="t" style="left:709px;top:615.15px;width:90px;text-align:right;font-size:14px;color:#000">135.00</div>
<div class="t" style="left:23px;top:636.15px;width:97px;text-align:center;font-size:14px;color:#000;">Fred</div>
<div class="t" style="left:121px;top:636.15px;width:97px;text-align:center;font-size:14px;color:#000;">1</div>
<div class="t" style="left:219px;top:636.15px;width:97px;text-align:center;font-size:14px;color:#000;">6</div>
<div class="t" style="left:317px;top:636.15px;width:97px;text-align:center;font-size:14px;color:#000;">Public</div>
<div class="t" style="left:415px;top:636.15px;width:97px;text-align:center;font-size:14px;color:#000;">6</div>
<div class="t d" style="left:520.2px;top:636.14px">S</div>
<div class="t" style="left:513px;top:636.15px;width:90px;text-align:right;font-size:14px;color:#000">450.00</div>
<div class="t d" style="left:618.2px;top:636.14px">S</div>
<div class="t" style="left:611px;top:636.15px;width:90px;text-align:right;font-size:14px;color:#000">2,700.00</div>
<div class="t d" style="left:716.2px;top:636.14px">S</div>
<div class="t" style="left:709px;top:636.15px;width:90px;text-align:right;font-size:14px;color:#000">450.00</div>
<div class="t" style="left:23px;top:657.15px;width:97px;text-align:center;font-size:14px;color:#000;">Martha</div>
<div class="t" style="left:121px;top:657.15px;width:97px;text-align:center;font-size:14px;color:#000;">2</div>
<div class="t" style="left:219px;top:657.15px;width:97px;text-align:center;font-size:14px;color:#000;">2</div>
<div class="t" style="left:317px;top:657.15px;width:97px;text-align:center;font-size:14px;color:#000;">Finance</div>
<div class="t" style="left:415px;top:657.15px;width:97px;text-align:center;font-size:14px;color:#000;">8</div>
<div class="t d" style="left:520.2px;top:657.14px">S</div>
<div class="t" style="left:513px;top:657.15px;width:90px;text-align:right;font-size:14px;color:#000">450.00</div>
<div class="t d" style="left:618.2px;top:657.14px">S</div>
<div class="t" style="left:611px;top:657.15px;width:90px;text-align:right;font-size:14px;color:#000">3,600.00</div>
<div class="t d" style="left:716.2px;top:657.14px">S</div>
<div class="t" style="left:709px;top:657.15px;width:90px;text-align:right;font-size:14px;color:#000">1,800.00</div>
<div class="t" style="left:23px;top:678.15px;width:97px;text-align:center;font-size:14px;color:#000;">Jacob</div>
<div class="t" style="left:121px;top:678.15px;width:97px;text-align:center;font-size:14px;color:#000;">3</div>
<div class="t" style="left:219px;top:678.15px;width:97px;text-align:center;font-size:14px;color:#000;">18</div>
<div class="t" style="left:317px;top:678.15px;width:97px;text-align:center;font-size:14px;color:#000;">Public</div>
<div class="t" style="left:415px;top:678.15px;width:97px;text-align:center;font-size:14px;color:#000;">2</div>
<div class="t d" style="left:520.2px;top:678.14px">S</div>
<div class="t" style="left:513px;top:678.15px;width:90px;text-align:right;font-size:14px;color:#000">450.00</div>
<div class="t d" style="left:618.2px;top:678.14px">S</div>
<div class="t" style="left:611px;top:678.15px;width:90px;text-align:right;font-size:14px;color:#000">900.00</div>
<div class="t d" style="left:716.2px;top:678.14px">S</div>
<div class="t" style="left:709px;top:678.15px;width:90px;text-align:right;font-size:14px;color:#000">50.00</div>
<div class="t" style="left:23px;top:699.15px;width:97px;text-align:center;font-size:14px;color:#000;">Tim</div>
<div class="t" style="left:121px;top:699.15px;width:97px;text-align:center;font-size:14px;color:#000;">3</div>
<div class="t" style="left:219px;top:699.15px;width:97px;text-align:center;font-size:14px;color:#000;">19</div>
<div class="t" style="left:317px;top:699.15px;width:97px;text-align:center;font-size:14px;color:#000;">Emergency</div>
<div class="t" style="left:415px;top:699.15px;width:97px;text-align:center;font-size:14px;color:#000;">9</div>
<div class="t d" style="left:520.2px;top:699.14px">S</div>
<div class="t" style="left:513px;top:699.15px;width:90px;text-align:right;font-size:14px;color:#000">450.00</div>
<div class="t d" style="left:618.2px;top:699.14px">S</div>
<div class="t" style="left:611px;top:699.15px;width:90px;text-align:right;font-size:14px;color:#000">4,050.00</div>
<div class="t d" style="left:716.2px;top:699.14px">S</div>
<div class="t" style="left:709px;top:699.15px;width:90px;text-align:right;font-size:14px;color:#000">213.16</div>
<div class="a" style="left:21px;top:188px;width:97px;height:42px;border:2px solid #0e6b37"></div>
<div class="a" style="left:117px;top:229px;width:7px;height:7px;background:#fff"></div>
<div class="a" style="left:118px;top:230px;width:5px;height:5px;background:#0e6b37"></div>
<svg class="a" style="left:0;top:0" width="815" height="725" viewBox="0 0 815 725"><rect x="30.6" y="46.4" width="19.8" height="23.2" fill="#fde49c" stroke="#e2700f" stroke-width="1.2"/><rect x="32.7" y="48.5" width="15.6" height="19.2" fill="#f9f9f9"/><rect x="42" y="52.8" width="16" height="20" fill="#fff"/><rect x="43.6" y="54.6" width="12.8" height="16.8" fill="#f7f7f7" stroke="#3a3a3a" stroke-width="1.1"/><path d="M34.6,45.6 H37.4 C37.8,43.3 39,42.3 40.5,42.3 C42,42.3 43.2,43.3 43.6,45.6 H46.4 V49.3 H34.6 Z" fill="#fff" stroke="#7a7a7a" stroke-width="1.1"/><path d="M38.2,98.2 L40.6,100.6 L43,98.2" fill="none" stroke="#333" stroke-width="1.1"/><path d="M73.6,41.2 C74.2,45 77.6,49 78.4,52.6 M78.4,41.2 C77.8,45 74.4,49 73.6,52.6" fill="none" stroke="#444" stroke-width="1.1"/><circle cx="72.9" cy="55.1" r="1.55" fill="#e8f2fb" stroke="#1a86d6" stroke-width="1.3"/><circle cx="79" cy="55.1" r="1.55" fill="#e8f2fb" stroke="#1a86d6" stroke-width="1.3"/><path d="M72.6,80.5 H68.5 V67.5 H73.6 L75.2,69.1" fill="none" stroke="#2b2b2b" stroke-width="1"/><path d="M74.5,70.5 H80 L83.5,74 V82.5 H74.5 Z" fill="#fff" stroke="#2b2b2b" stroke-width="1"/><path d="M79.5,70.5 V74.5 H83.5 M77,77.5 H81 M77,79.5 H81" fill="none" stroke="#2b2b2b" stroke-width="1"/><path d="M128.9,74.2 L131.6,76.9 L134.3,74.2" fill="none" stroke="#333" stroke-width="1.1"/><path d="M75.6,96.3 L68.6,99.8 L75,107.2 L81.2,102.8 Z" fill="#fff" stroke="#e2700f" stroke-width="1.3" stroke-linejoin="round"/><path d="M71.8,103.4 L75,107 L78.6,104.3 Z" fill="#fde49c"/><path d="M75.2,96.1 L76.4,94.9 L82.3,100.8 L81.1,102 Z" fill="#fff" stroke="#333" stroke-width="1.2" stroke-linejoin="round"/><path d="M79.4,97.9 L82.8,94.5" stroke="#333" stroke-width="3.4" stroke-linecap="round"/><path d="M79.4,97.9 L82.8,94.5" stroke="#fff" stroke-width="1.2" stroke-linecap="round"/><path d="M171.5,125.7 V119.7 H177.5" fill="none" stroke="#555" stroke-width="1"/><path d="M173.5,121.7 L178.5,126.7 M178.8,122.7 V127.0 H174.5" fill="none" stroke="#555" stroke-width="1"/><path d="M407.5,126.3 V120.3 H413.5" fill="none" stroke="#555" stroke-width="1"/><path d="M409.5,122.3 L414.5,127.3 M414.8,123.3 V127.6 H410.5" fill="none" stroke="#555" stroke-width="1"/><path d="M701.5,125.8 V119.8 H707.5" fill="none" stroke="#555" stroke-width="1"/><path d="M703.5,121.8 L708.5,126.8 M708.8,122.8 V127.1 H704.5" fill="none" stroke="#555" stroke-width="1"/><path d="M305.5,56 L308.0,58.8 L310.5,56" fill="none" stroke="#333" stroke-width="1.1"/><path d="M349.8,55.8 L352.3,58.8 L354.8,55.8" fill="none" stroke="#333" stroke-width="1.1"/><path d="M366.6,61.4 L371.5,49.2 L376.5,61.4 M368.4,57.2 H374.6" fill="none" stroke="#333" stroke-width="1.1"/><path d="M376.4,52.5 L378.5,50.2 L380.6,52.5" fill="none" stroke="#1a86d6" stroke-width="1.2"/><path d="M394.3,61.4 L398,52.4 L401.9,61.4 M395.6,58.3 H400.6" fill="none" stroke="#333" stroke-width="1.1"/><path d="M402.3,50.2 L404.5,52.5 L406.7,50.2" fill="none" stroke="#1a86d6" stroke-width="1.2"/><text x="0" y="0" font-family="Liberation Sans" font-weight="700" font-size="13.6" fill="#2b2b2b" transform="translate(199.2,92.9) scale(0.84,1)">B</text><path d="M230.2,83.6 L227.6,92.4 M228,83.6 H232.4 M225.4,92.4 H229.8" fill="none" stroke="#333" stroke-width="1.15"/><path d="M251,83.2 V89.4 C251,93.2 258.2,93.2 258.2,89.4 V83.2" fill="none" stroke="#333" stroke-width="1.15"/><path d="M250.2,94.8 H259.2" stroke="#333" stroke-width="1.1"/><path d="M270.6,88.2 L273.4,90.8 L276.2,88.2" fill="none" stroke="#333" stroke-width="1.1"/><path d="M284.5,77.5 V100.8 M328.5,77.5 V100.8" stroke="#d6d6d6" stroke-width="1"/><rect x="291" y="81" width="1" height="1" fill="#333"/><rect x="299" y="88" width="1" height="1" fill="#333"/><rect x="291" y="87" width="1" height="1" fill="#333"/><rect x="293" y="81" width="1" height="1" fill="#333"/><rect x="305" y="83" width="1" height="1" fill="#333"/><rect x="291" y="93" width="1" height="1" fill="#333"/><rect x="305" y="89" width="1" height="1" fill="#333"/><rect x="298" y="83" width="1" height="1" fill="#333"/><rect x="298" y="89" width="1" height="1" fill="#333"/><rect x="301" y="88" width="1" height="1" fill="#333"/><rect x="295" y="81" width="1" height="1" fill="#333"/><rect x="303" y="88" width="1" height="1" fill="#333"/><rect x="297" y="81" width="1" height="1" fill="#333"/><rect x="299" y="81" width="1" height="1" fill="#333"/><rect x="291" y="83" width="1" height="1" fill="#333"/><rect x="305" y="85" width="1" height="1" fill="#333"/><rect x="291" y="89" width="1" height="1" fill="#333"/><rect x="305" y="88" width="1" height="1" fill="#333"/><rect x="305" y="91" width="1" height="1" fill="#333"/><rect x="298" y="85" width="1" height="1" fill="#333"/><rect x="301" y="81" width="1" height="1" fill="#333"/><rect x="298" y="91" width="1" height="1" fill="#333"/><rect x="303" y="81" width="1" height="1" fill="#333"/><rect x="291" y="85" width="1" height="1" fill="#333"/><rect x="305" y="81" width="1" height="1" fill="#333"/><rect x="291" y="88" width="1" height="1" fill="#333"/><rect x="305" y="87" width="1" height="1" fill="#333"/><rect x="291" y="91" width="1" height="1" fill="#333"/><rect x="293" y="88" width="1" height="1" fill="#333"/><rect x="305" y="93" width="1" height="1" fill="#333"/><rect x="298" y="87" width="1" height="1" fill="#333"/><rect x="298" y="93" width="1" height="1" fill="#333"/><rect x="295" y="88" width="1" height="1" fill="#333"/><rect x="297" y="88" width="1" height="1" fill="#333"/><rect x="291" y="95" width="15" height="1.2" fill="#1a1a1a"/><circle cx="298.5" cy="88.5" r="1.3" fill="#fff" stroke="#333" stroke-width="0.8"/><path d="M314.8,88 L317.6,90.8 L320.4,88" fill="none" stroke="#333" stroke-width="1.1"/><path d="M342.4,83.4 L337.6,87.6 L341.9,91.6 L346.8,85.9" fill="#fff" stroke="#222" stroke-width="1.15" stroke-linejoin="round"/><path d="M342.4,83.6 V82.8 C342.4,80.9 344.5,80.9 344.5,82.8 V86.6" fill="none" stroke="#222" stroke-width="1.1" stroke-linecap="round"/><path d="M346.3,85.6 C348.3,84.6 349.2,87.4 348.5,90.6" fill="none" stroke="#0f6cbd" stroke-width="1.6" stroke-linecap="round"/><rect x="334.8" y="92.9" width="16.3" height="4" fill="#ffff00"/><path d="M358.8,88 L361.6,90.8 L364.4,88" fill="none" stroke="#333" stroke-width="1.1"/><path d="M379.6,91.4 L384.2,81.8 L388.8,91.4 M381.4,87.6 H387" fill="none" stroke="#333" stroke-width="1.1"/><rect x="375.8" y="92.8" width="16" height="4" fill="#ff0000"/><path d="M399.8,88 L402.6,90.8 L405.4,88" fill="none" stroke="#333" stroke-width="1.1"/><rect x="453.5" y="45.5" width="23" height="23" rx="4" fill="#ebebeb" stroke="#8a8a8a" stroke-width="1"/><rect x="453.5" y="77.5" width="23" height="23" rx="4" fill="#ebebeb" stroke="#8a8a8a" stroke-width="1"/><path d="M432,49.5 H446" stroke="#333" stroke-width="1"/><path d="M435,53.5 H443" stroke="#333" stroke-width="1"/><path d="M432,57.5 H446" stroke="#333" stroke-width="1"/><path d="M458.5,52.5 H471.5" stroke="#333" stroke-width="1"/><path d="M461,56.5 H469" stroke="#333" stroke-width="1"/><path d="M458.5,60.5 H471.5" stroke="#333" stroke-width="1"/><path d="M484,56.5 H498" stroke="#333" stroke-width="1"/><path d="M487,60.5 H495" stroke="#333" stroke-width="1"/><path d="M484,64.5 H498" stroke="#333" stroke-width="1"/><path d="M432,82.5 H446" stroke="#333" stroke-width="1"/><path d="M432,86.5 H442" stroke="#333" stroke-width="1"/><path d="M432,90.5 H446" stroke="#333" stroke-width="1"/><path d="M432,94.5 H442" stroke="#333" stroke-width="1"/><path d="M458,82.5 H472" stroke="#333" stroke-width="1"/><path d="M460.5,86.5 H469.5" stroke="#333" stroke-width="1"/><path d="M458,90.5 H472" stroke="#333" stroke-width="1"/><path d="M460.5,94.5 H469.5" stroke="#333" stroke-width="1"/><path d="M484,82.5 H498" stroke="#333" stroke-width="1"/><path d="M488,86.5 H498" stroke="#333" stroke-width="1"/><path d="M484,90.5 H498" stroke="#333" stroke-width="1"/><path d="M488,94.5 H498" stroke="#333" stroke-width="1"/><path d="M505.5,45 V69 M505.5,77 V100.5" stroke="#d6d6d6" stroke-width="1"/><text x="0" y="0" font-family="Liberation Sans" font-size="11.5" fill="#333" transform="translate(514.2,61.4) rotate(-45)">ab</text><path d="M517.4,63.4 L527.6,53.4 M523.4,53.6 H527.6 V57.8" fill="none" stroke="#1a86d6" stroke-width="1.2"/><path d="M533.8,55.8 L536.5,58.5 L539.2,55.8" fill="none" stroke="#333" stroke-width="1.1"/><path d="M513,82.5 H527" stroke="#333" stroke-width="1"/><path d="M521,86.5 H527" stroke="#333" stroke-width="1"/><path d="M521,90.5 H527" stroke="#333" stroke-width="1"/><path d="M513,94.5 H527" stroke="#333" stroke-width="1"/><path d="M519.6,88.5 H513.6 M516,86.2 L513.6,88.5 L516,90.8" fill="none" stroke="#1a86d6" stroke-width="1.1"/><path d="M539,82.5 H553" stroke="#333" stroke-width="1"/><path d="M547.5,86.5 H553" stroke="#333" stroke-width="1"/><path d="M547.5,90.5 H553" stroke="#333" stroke-width="1"/><path d="M539,94.5 H553" stroke="#333" stroke-width="1"/><path d="M539.4,88.5 H545.6 M543.2,86.2 L545.6,88.5 L543.2,90.8" fill="none" stroke="#1a86d6" stroke-width="1.1"/><path d="M564.5,44 V105" stroke="#d6d6d6" stroke-width="1"/><rect x="571.5" y="45.5" width="84" height="23" rx="4" fill="#ebebeb" stroke="#8a8a8a" stroke-width="1"/><text x="577" y="56.4" font-family="Liberation Sans" font-size="9.6" fill="#333">ab</text><text x="577" y="63.8" font-family="Liberation Sans" font-size="9.6" fill="#333">c</text><path d="M589.8,57.6 C591.4,60 590,62 586.6,61.6 H584.6 M586.6,59.6 L584.4,61.6 L586.6,63.6" fill="none" stroke="#1a86d6" stroke-width="1.2"/><rect x="575.5" y="81.5" width="14" height="14" fill="#fff" stroke="#333" stroke-width="1"/><path d="M582.5,81.5 V84.5 M582.5,92.5 V95.5" stroke="#333" stroke-width="1"/><rect x="575.5" y="84.5" width="14" height="8" fill="#fff" stroke="#1a86d6" stroke-width="1.2"/><path d="M577.5,88.5 H587.5 M579.5,86.5 L577.5,88.5 L579.5,90.5 M585.5,86.5 L587.5,88.5 L585.5,90.5" fill="none" stroke="#1a86d6" stroke-width="1.1"/><path d="M692.8,88.6 L695.5,91.4 L698.2,88.6" fill="none" stroke="#333" stroke-width="1.1"/><rect x="725.6" y="84.6" width="14.8" height="8.8" fill="#fff" stroke="#2b2b2b" stroke-width="1.1"/><path d="M729.6,86.5 C727.5,87.5 727.5,91.1 729.6,92.1 M733.8,86.5 C731.7,87.5 731.7,91.1 733.8,92.1 M736.2,86.6 H738.4" fill="none" stroke="#2b2b2b" stroke-width="1.1"/><rect x="732.4" y="87.2" width="9.6" height="10" fill="#fff"/><path d="M733.7,89.4 V95 C733.7,96.9 740.3,96.9 740.3,95 V89.4" fill="#fff" stroke="#e0700f" stroke-width="1.2"/><path d="M733.7,92.3 C733.7,94.1 740.3,94.1 740.3,92.3" fill="none" stroke="#e0700f" stroke-width="1.1"/><ellipse cx="737" cy="89.4" rx="3.3" ry="1.3" fill="#fcd68f" stroke="#e0700f" stroke-width="1.1"/><path d="M748.7,87.8 L751.5,91 L754.3,87.8" fill="none" stroke="#333" stroke-width="1.1"/><circle cx="770" cy="85.6" r="2.8" fill="none" stroke="#333" stroke-width="1.05"/><circle cx="778" cy="92.2" r="2.8" fill="none" stroke="#333" stroke-width="1.05"/><path d="M768.2,95.6 L779.6,82.2" stroke="#333" stroke-width="1.05"/><path d="M801,83.3 C803.4,83.3 804.6,85.2 804.4,87.6 C804.2,90.8 801.6,93.6 797.6,94.9 L797.2,94 C799.6,92.8 800.8,91.5 801.2,89.7 C799.4,89.6 798.2,88.3 798.2,86.6 C798.2,84.6 799.4,83.3 801,83.3 Z" fill="#2b2b2b"/><path d="M814.5,77 V101" stroke="#d6d6d6" stroke-width="1"/><path d="M96,153 L101.0,158 L106,153" fill="none" stroke="#333" stroke-width="1.2"/><rect x="121" y="149.2" width="2" height="2" fill="#222"/><rect x="121" y="153.2" width="2" height="2" fill="#222"/><rect x="121" y="157.2" width="2" height="2" fill="#222"/><path d="M139,148 L151,160 M151,148 L139,160" stroke="#b5b5b5" stroke-width="1.1"/><path d="M161,153.6 L166,158.8 L177,148" fill="none" stroke="#b5b5b5" stroke-width="1.1"/><text x="184.6" y="158.2" font-family="Liberation Serif" font-style="italic" font-size="17.5" letter-spacing="0.6" fill="#222" stroke="#222" stroke-width="0.25">fx</text><path d="M11.8,185.5 H18.8 V178.5 Z" fill="#dcdcdc"/></svg>
</body></html>
